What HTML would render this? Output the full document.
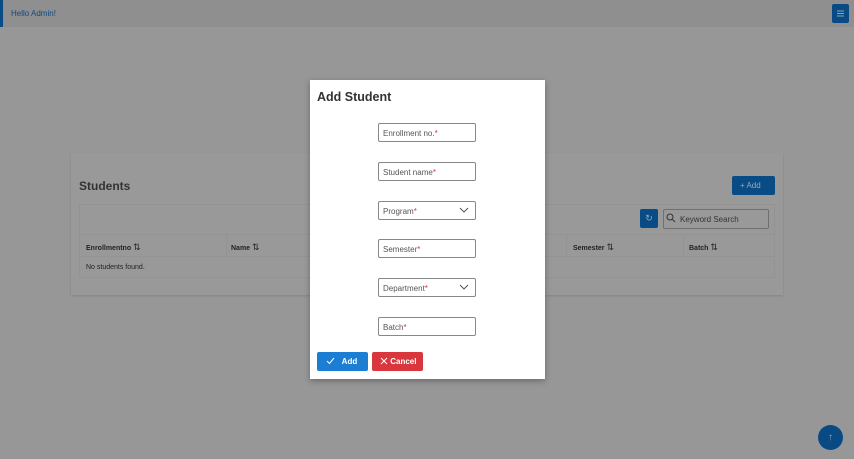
<!DOCTYPE html>
<html><head><style>
*{box-sizing:border-box;margin:0;padding:0}
body{width:854px;height:459px;background:#979797;font-family:"Liberation Sans",sans-serif;position:relative;overflow:hidden}
.a{position:absolute}
.top{left:0;top:0;width:854px;height:27px;background:#8f8f8f}
.inp{position:absolute;left:68px;width:98px;height:19px;border:1px solid #888;border-radius:2px;font-size:8px;color:#555;padding:5px 0 0 4px}
.inp b{color:#d33;font-weight:normal}
.chev{position:absolute;right:6px;top:3px}
.th{position:absolute;top:242px;font-size:7px;font-weight:bold;color:#222}
.ln{background:#939393}
</style></head><body>
<div class="a top"></div>
<div class="a" style="left:0;top:0;width:3px;height:27px;background:#094b84"></div>
<div class="a" style="left:11px;top:9px;font-size:8px;color:#0d4a80">Hello Admin!</div>
<div class="a" style="left:832px;top:4px;width:17px;height:19px;background:#094a84;border-radius:2px">
<svg width="17" height="19"><path d="M5 7h7M5 9.5h7M5 12h7" stroke="#8aa" stroke-width="1"/></svg></div>

<div class="a" style="left:71px;top:153px;width:712px;height:142px;background:#999;box-shadow:0 1px 2px rgba(0,0,0,.12)"></div>
<div class="a" style="left:79px;top:179px;font-size:12px;font-weight:bold;color:#333">Students</div>
<div class="a" style="left:732px;top:176px;width:43px;height:19px;background:#094b84;border-radius:2px;color:#9ab;font-size:8px;padding:5px 0 0 8px">+ Add</div>
<div class="a" style="left:79px;top:204px;width:696px;height:74px;border:1px solid #939393"></div>
<div class="a" style="left:640px;top:209px;width:18px;height:19px;background:#094b84;border-radius:2px;color:#9ab;font-size:9px;text-align:center;line-height:19px">↻</div>
<div class="a" style="left:663px;top:209px;width:106px;height:20px;border:1px solid #6f6f6f;border-radius:2px;font-size:8px;color:#333;padding:5px 0 0 16px">Keyword Search</div>
<svg class="a" style="left:666px;top:213px" width="10" height="10"><circle cx="4" cy="4" r="3" fill="none" stroke="#333"/><path d="M6.5 6.5l2.5 2.5" stroke="#333"/></svg>
<div class="a" style="left:79px;top:234px;width:696px;height:23px;border-top:1px solid #939393;border-bottom:1px solid #939393"></div>
<div class="a ln" style="left:226px;top:234px;width:1px;height:23px"></div>
<div class="a ln" style="left:566px;top:234px;width:1px;height:23px"></div>
<div class="a ln" style="left:683px;top:234px;width:1px;height:23px"></div>
<div class="th" style="left:86px">Enrollmentno <span style="font-weight:normal;font-size:9px">⇅</span></div>
<div class="th" style="left:231px">Name <span style="font-weight:normal;font-size:9px">⇅</span></div>
<div class="th" style="left:573px">Semester <span style="font-weight:normal;font-size:9px">⇅</span></div>
<div class="th" style="left:689px">Batch <span style="font-weight:normal;font-size:9px">⇅</span></div>
<div class="a" style="left:86px;top:264px;font-size:7px;color:#222">No students found.</div>

<div class="a" style="left:818px;top:425px;width:25px;height:25px;border-radius:50%;background:#094a84;color:#8ab;font-size:10px;text-align:center;line-height:25px">↑</div>

<div class="a" style="left:310px;top:80px;width:235px;height:299px;background:#fff;box-shadow:0 2px 6px rgba(0,0,0,.3)">
<div class="a" style="left:7px;top:10px;font-size:12.5px;font-weight:bold;color:#333">Add Student</div>
<div class="inp" style="top:43px">Enrollment no.<b>*</b></div>
<div class="inp" style="top:82px">Student name<b>*</b></div>
<div class="inp" style="top:121px">Program<b>*</b><svg class="chev" width="10" height="10"><path d="M1 3l4 4 4-4" fill="none" stroke="#555"/></svg></div>
<div class="inp" style="top:159px">Semester<b>*</b></div>
<div class="inp" style="top:198px">Department<b>*</b><svg class="chev" width="10" height="10"><path d="M1 3l4 4 4-4" fill="none" stroke="#555"/></svg></div>
<div class="inp" style="top:237px">Batch<b>*</b></div>
<div class="a" style="left:7px;top:272px;width:51px;height:19px;background:#1b7ed3;border-radius:2px;color:#fff;font-size:8px;font-weight:bold;padding:5px 0 0 9px"><svg width="9" height="8" style="vertical-align:-1px"><path d="M1 4l2.5 2.5L8 1" fill="none" stroke="#fff"/></svg>&nbsp;&nbsp;&nbsp;Add</div>
<div class="a" style="left:62px;top:272px;width:51px;height:19px;background:#d9363e;border-radius:2px;color:#fff;font-size:8px;font-weight:bold;padding:5px 0 0 8px"><svg width="8" height="8" style="vertical-align:-1px"><path d="M1 1l6 6M7 1l-6 6" stroke="#fff"/></svg> Cancel</div>
</div>
</body></html>
